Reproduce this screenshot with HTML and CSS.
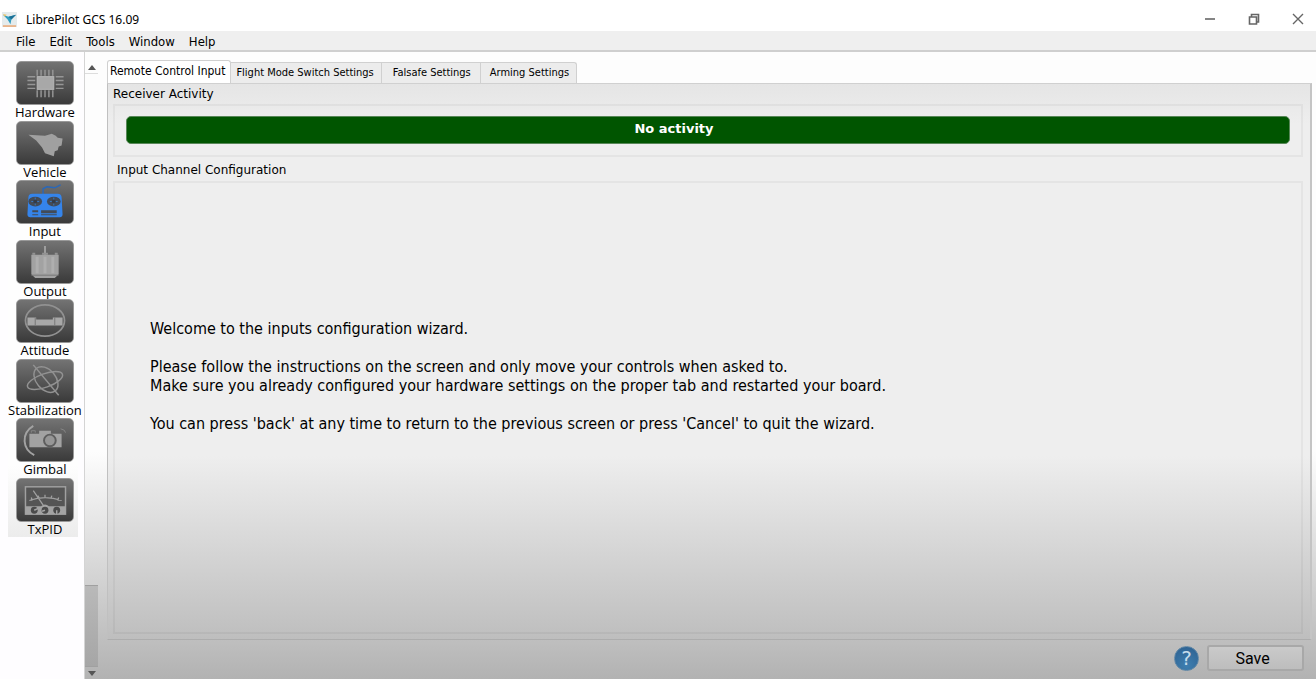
FILE: index.html
```html
<!DOCTYPE html>
<html lang="en">
<head>
<meta charset="utf-8">
<title>LibrePilot GCS 16.09</title>
<link rel="stylesheet" href="styles.css">
</head>
<body>
<div class="app">
  <header class="titlebar">
    <svg class="logo" viewBox="0 0 16 16" aria-hidden="true">
      <rect width="16" height="16" fill="#e4ebec"/>
      <path d="M1 3l6 2 8-2-5 5-1 5-3-5z" fill="#2f9dc0"/>
      <path d="M7 5l8-2-5 5z" fill="#1b6f96"/>
      <path d="M1 2l4 1-2 2z" fill="#e8c46a"/>
      <path d="M1 14h14v2H1z" fill="#e9b58c"/>
    </svg>
    <h1 class="title">LibrePilot GCS 16.09</h1>
    <div class="window-buttons">
      <button class="window-button" type="button" aria-label="Minimize">
        <svg viewBox="0 0 12 12"><path d="M1 6h10" stroke-width="1.6"/></svg>
      </button>
      <button class="window-button" type="button" aria-label="Restore">
        <svg viewBox="0 0 12 12"><path d="M1.5 4h7v7h-7zM3.500 4V1.500h7v7.500H8.500" stroke-width="1.600"/></svg>
      </button>
      <button class="window-button" type="button" aria-label="Close">
        <svg viewBox="0 0 12 12"><path d="M1 1l10 10M11 1L1 11" stroke-width="1.400"/></svg>
      </button>
    </div>
  </header>

  <nav class="menubar" aria-label="Main menu">
    <button class="menu" type="button">File</button>
    <button class="menu" type="button">Edit</button>
    <button class="menu" type="button">Tools</button>
    <button class="menu" type="button">Window</button>
    <button class="menu" type="button">Help</button>
  </nav>

  <div class="workspace">
    <nav class="sidebar" aria-label="Configuration">
      <div class="tools">
        <button class="tool" type="button">
          <svg class="tool-icon" viewBox="0 0 56 43" aria-hidden="true">
            <path d="M20 8v6M24 8v6M28 8v6M32 8v6M36 8v6M20 29v7M24 29v7M28 29v7M32 29v7M36 29v7M10 15h8M10 19h8M10 23h8M10 27h8M39 15h8M39 19h8M39 23h8M39 27h8" stroke="#969696" stroke-width="1.500"/>
            <rect x="20" y="15" width="17" height="13" fill="#a8a8a8" stroke="#b8b8b8"/>
          </svg>
          <span class="tool-label">Hardware</span>
        </button>
        <button class="tool" type="button">
          <svg class="tool-icon" viewBox="0 0 56 43" aria-hidden="true">
            <path d="M11 13l17 1 7-2 4 2 2 2 5 1-1 7-3 1-1 4-3 1-1 5-9-3-3-6-6-7z" fill="#a0a0a0"/>
          </svg>
          <span class="tool-label">Vehicle</span>
        </button>
        <button class="tool" type="button" aria-current="page">
          <svg class="tool-icon" viewBox="0 0 56 43" aria-hidden="true">
            <path d="M26 14V8l4-2 8 1 6-3" fill="none" stroke="#2968ba" stroke-width="1.500"/>
            <path d="M15 13h26q4 0 4 4l1 17q0 3-3 3H13q-3 0-3-3l1-17q0-4 4-4z" fill="#3584ea"/>
            <g fill="#434b57"><ellipse cx="18" cy="21" rx="7" ry="5"/><ellipse cx="37" cy="21" rx="7" ry="5"/><path d="M15 30h6v2h-6zM15 34h6v1h-6zM24 30h16v3H24zM24 34h16v1H24z"/></g>
            <path d="M14 21h8M18 17v8M33 21h8M37 17v8" stroke="#3978c2"/>
            <g fill="#343b47"><circle cx="18" cy="21" r="2"/><circle cx="37" cy="21" r="2"/></g>
          </svg>
          <span class="tool-label">Input</span>
        </button>
        <button class="tool" type="button">
          <svg class="tool-icon" viewBox="0 0 56 43" aria-hidden="true">
            <path d="M28 5v9" stroke="#a0a0a0" stroke-width="2"/>
            <path d="M15 14v-2h3v2h7v-2h6v2h7v-2h3v2z" fill="#929292"/>
            <path d="M14 14h28v20l-4 4H18l-4-4z" fill="#a2a2a2"/>
            <path d="M20 16v17M28 16v17M36 16v17" stroke="#afafaf" stroke-width="3"/>
            <path d="M14 35h28" stroke="#777"/>
          </svg>
          <span class="tool-label">Output</span>
        </button>
        <button class="tool" type="button">
          <svg class="tool-icon" viewBox="0 0 56 43" aria-hidden="true">
            <path d="M10 18h9v2h17v-2h10v8H10z" fill="#a8a8a8"/>
            <path d="M18 18v8M38 18v8" stroke="#777"/>
            <ellipse cx="28" cy="21" rx="20" ry="16" fill="none" stroke="#919191" stroke-width="1.800"/>
          </svg>
          <span class="tool-label">Attitude</span>
        </button>
        <button class="tool" type="button">
          <svg class="tool-icon" viewBox="0 0 56 43" aria-hidden="true">
            <g fill="none" stroke="#929292" stroke-width="1.500">
              <ellipse cx="28" cy="21" rx="19" ry="7" transform="rotate(-20 28 21)"/>
              <ellipse cx="29" cy="20" rx="15" ry="10" transform="rotate(50 29 20)"/>
              <path d="M16 5l26 31"/>
            </g>
          </svg>
          <span class="tool-label">Stabilization</span>
        </button>
        <button class="tool" type="button">
          <svg class="tool-icon" viewBox="0 0 56 43" aria-hidden="true">
            <path d="M16 7C3 15 5 31 17 37" fill="none" stroke="#a2a2a2" stroke-width="2"/>
            <path d="M12 15h10v-3h12v3h11v14H12z" fill="#a2a2a2"/>
            <path d="M14 14v-2h4v2M44 10q5 1 5 4" fill="none" stroke="#858585"/>
            <circle cx="33" cy="22" r="6" fill="#969696" stroke="#5e5e5e" stroke-width="2"/>
          </svg>
          <span class="tool-label">Gimbal</span>
        </button>
        <button class="tool" type="button">
          <svg class="tool-icon" viewBox="0 0 56 43" aria-hidden="true">
            <rect x="8" y="8" width="41" height="28" fill="#555" stroke="#a0a0a0" stroke-width="1.500"/>
            <path d="M12 22q16-6 33 0M14 19l1 3M21 17l1 3M28 16v3M35 17l-1 3M42 19l-1 3M16 12l11 16" fill="none" stroke="#a0a0a0" stroke-width="1.300"/>
            <path d="M8 28h16q4-4 8 0h17v8H8z" fill="#a3a3a3"/>
            <g fill="#4b4b4b"><circle cx="17" cy="32" r="3.500"/><circle cx="28" cy="32" r="3.500"/><circle cx="40" cy="32" r="3.500"/></g>
            <path d="M17 32l4-2M28 32l-3 1M40 32v4" stroke="#a3a3a3" stroke-width="1.500"/>
          </svg>
          <span class="tool-label">TxPID</span>
        </button>
      </div>
    </nav>

    <div class="content">
      <div class="scrollbar">
        <button class="scroll-arrow" type="button" aria-label="Scroll up"><svg viewBox="0 0 8 5"><path d="M0 5l4-5 4 5z"/></svg></button>
        <div class="scroll-thumb"></div>
        <div class="scroll-track"></div>
        <button class="scroll-arrow scroll-down" type="button" aria-label="Scroll down"><svg viewBox="0 0 8 5"><path d="M0 0h8L4 5z"/></svg></button>
      </div>

      <main class="main">
        <div class="tabs" role="tablist">
          <button class="tab tab-active" type="button" role="tab" aria-selected="true">Remote Control Input</button>
          <button class="tab tab-flight" type="button" role="tab" aria-selected="false">Flight Mode Switch Settings</button>
          <button class="tab tab-failsafe" type="button" role="tab" aria-selected="false">Falsafe Settings</button>
          <button class="tab" type="button" role="tab" aria-selected="false">Arming Settings</button>
        </div>
        <div class="panel" role="tabpanel">
          <h2 class="group-title">Receiver Activity</h2>
          <section class="group">
            <div class="activity" role="status">No activity</div>
          </section>
          <h2 class="group-title group-title-channels">Input Channel Configuration</h2>
          <section class="group wizard">
            <p>Welcome to the inputs configuration wizard.</p>
            <p>Please follow the instructions on the screen and only move your controls when asked to.<br>Make sure you already configured your hardware settings on the proper tab and restarted your board.</p>
            <p>You can press 'back' at any time to return to the previous screen or press 'Cancel' to quit the wizard.</p>
          </section>
        </div>
        <footer class="actions">
          <button class="help" type="button" aria-label="Help">?</button>
          <button class="save" type="button">Save</button>
        </footer>
      </main>
    </div>
  </div>
</div>
</body>
</html>
```
FILE: styles.css
```css
* {
  box-sizing: border-box;
}

body {
  margin: 0;
  background: #fff;
  color: #000;
  font-family: "DejaVu Sans", sans-serif;
  font-size: 12px;
}

button {
  margin: 0;
  padding: 0;
  border: 0;
  background: none;
  color: inherit;
  font: inherit;
}

svg {
  display: block;
}

.app {
  display: flex;
  flex-direction: column;
  min-height: 100vh;
  padding-bottom: 19px;
}

/* Title bar */
.titlebar {
  display: flex;
  align-items: center;
  height: 31px;
  padding: 7px 12px 0 2px;
}

.logo {
  width: 15px;
  height: 15px;
}

.title {
  flex: 1;
  margin: 0 0 0 9px;
  font-family: "Noto Sans", sans-serif;
  font-size: 12px;
  font-weight: 400;
}

.window-buttons {
  display: flex;
  gap: 32px;
}

.window-button svg {
  width: 12px;
  height: 12px;
  fill: none;
  stroke: #666;
}

/* Menus */
.menubar {
  display: flex;
  gap: 14px;
  height: 21px;
  padding: 2px 16px 0;
  border-bottom: 2px solid #cfcfcf;
  background: #efefef;
}

.menu {
  font-family: "DejaVu Sans Condensed", "DejaVu Sans", sans-serif;
  font-size: 13px;
  font-stretch: condensed;
}

.workspace {
  display: flex;
  flex: 1;
}

/* Sidebar */
.sidebar {
  width: 84px;
  padding: 9px 6px 0 8px;
  background: #fefdff;
}

.tools {
  display: grid;
  grid-auto-rows: 1fr;
  width: 70px;
  height: 476px;
  background: linear-gradient(#fefefe 85%, #ececec);
}

.tool {
  display: flex;
  flex-direction: column;
  align-items: center;
}

.tool-icon {
  flex: none;
  width: 58px;
  height: 44px;
  border: 1px solid #999;
  border-radius: 5px;
  background: linear-gradient(#737373, #3a3a3a);
}

.tool-label {
  font-family: "Open Sans", "Noto Sans", sans-serif;
  font-size: 13px;
  line-height: 15px;
}

/* Shaded area */
.content {
  display: flex;
  flex: 1;
  padding-right: 4px;
  border-left: 1px solid #d4d4d4;
  background: linear-gradient(#fdfdfd 0, #fdfdfd 400px, #b2b2b2 100%);
}

.scrollbar {
  display: flex;
  flex-direction: column;
  width: 13px;
  margin-right: 9px;
}

.scroll-arrow {
  display: grid;
  place-items: center;
  height: 22px;
  padding-top: 10px;
  border-bottom: 1px solid #ddd;
}

.scroll-arrow svg {
  width: 8px;
  height: 5px;
  fill: #555;
}

.scroll-thumb {
  flex: 1;
}

.scroll-track {
  height: 82px;
  border: solid #a0a0a0;
  border-width: 1px 0;
  background: linear-gradient(#b9b9b9, #a6a6a6);
}

.scroll-down {
  height: 12px;
  padding: 0;
  border: 0;
}

.main {
  display: flex;
  flex: 1;
  flex-direction: column;
}

.tabs {
  display: flex;
  align-items: flex-end;
  height: 31px;
}

.tab {
  height: 21px;
  padding: 0 7px 2px 9px;
  border: 1px solid #d0d0d0;
  border-bottom: 0;
  border-left: 0;
  background: #ececec;
  font-family: "DejaVu Sans Condensed", "DejaVu Sans", sans-serif;
  font-size: 11px;
  font-stretch: condensed;
}

.tab:last-child {
  border-top-right-radius: 3px;
}

.tab-flight {
  padding: 0 7px 2px 5px;
}

.tab-failsafe {
  padding: 0 9px 2px 11px;
}

.tab-active {
  height: 23px;
  padding: 0 5px 2px 2px;
  border-left: 1px solid #d0d0d0;
  border-radius: 3px 3px 0 0;
  background: #fff;
  font-size: 12px;
}

.panel {
  display: flex;
  flex: 1;
  flex-direction: column;
  padding: 0 7px 5px 5px;
  border: 1px solid #c0c0c0;
  border-top-color: #d0d0d0;
  border-right: 2px solid #c4c4c4;
  border-bottom-color: #adadad;
  background: linear-gradient(#e5e5e5 0, #eee 40px, #eee 372px, #bebebe 100%);
}

.group-title {
  margin: 0;
  font-size: 12px;
  font-weight: 400;
  line-height: 20px;
}

.group-title-channels {
  padding: 3px 4px 1px;
}

.group {
  padding: 10px 11px 11px;
  border: 2px solid rgb(0 0 0 / 4%);
}

.activity {
  height: 28px;
  padding-right: 68px;
  border: 1px solid #588758;
  border-radius: 5px;
  background: #005500;
  color: #fff;
  font-size: 13px;
  font-weight: 700;
  line-height: 24px;
  text-align: center;
}

.wizard {
  flex: 1;
  padding: 136px 35px 0;
  font-family: "DejaVu Sans Condensed", "DejaVu Sans", sans-serif;
  font-size: 16px;
  font-stretch: condensed;
  line-height: 19px;
}

.wizard p {
  margin: 0 0 19px;
}

.actions {
  display: flex;
  align-items: center;
  justify-content: flex-end;
  gap: 8px;
  height: 39px;
  padding: 0 8px 3px;
}

.help {
  width: 25px;
  height: 25px;
  border: 1px solid #5e86a6;
  border-radius: 50%;
  background: radial-gradient(circle at 50% 80%, #3f7fb0, #2c5f8f);
  color: #c6dceb;
  font-size: 20px;
  line-height: 20px;
}

.save {
  width: 97px;
  height: 26px;
  padding-right: 6px;
  border: 2px solid #a8a8a8;
  border-radius: 3px;
  background: linear-gradient(#cacaca, #bdbdbd);
  font-family: Roboto, sans-serif;
  font-size: 16px;
}
```
